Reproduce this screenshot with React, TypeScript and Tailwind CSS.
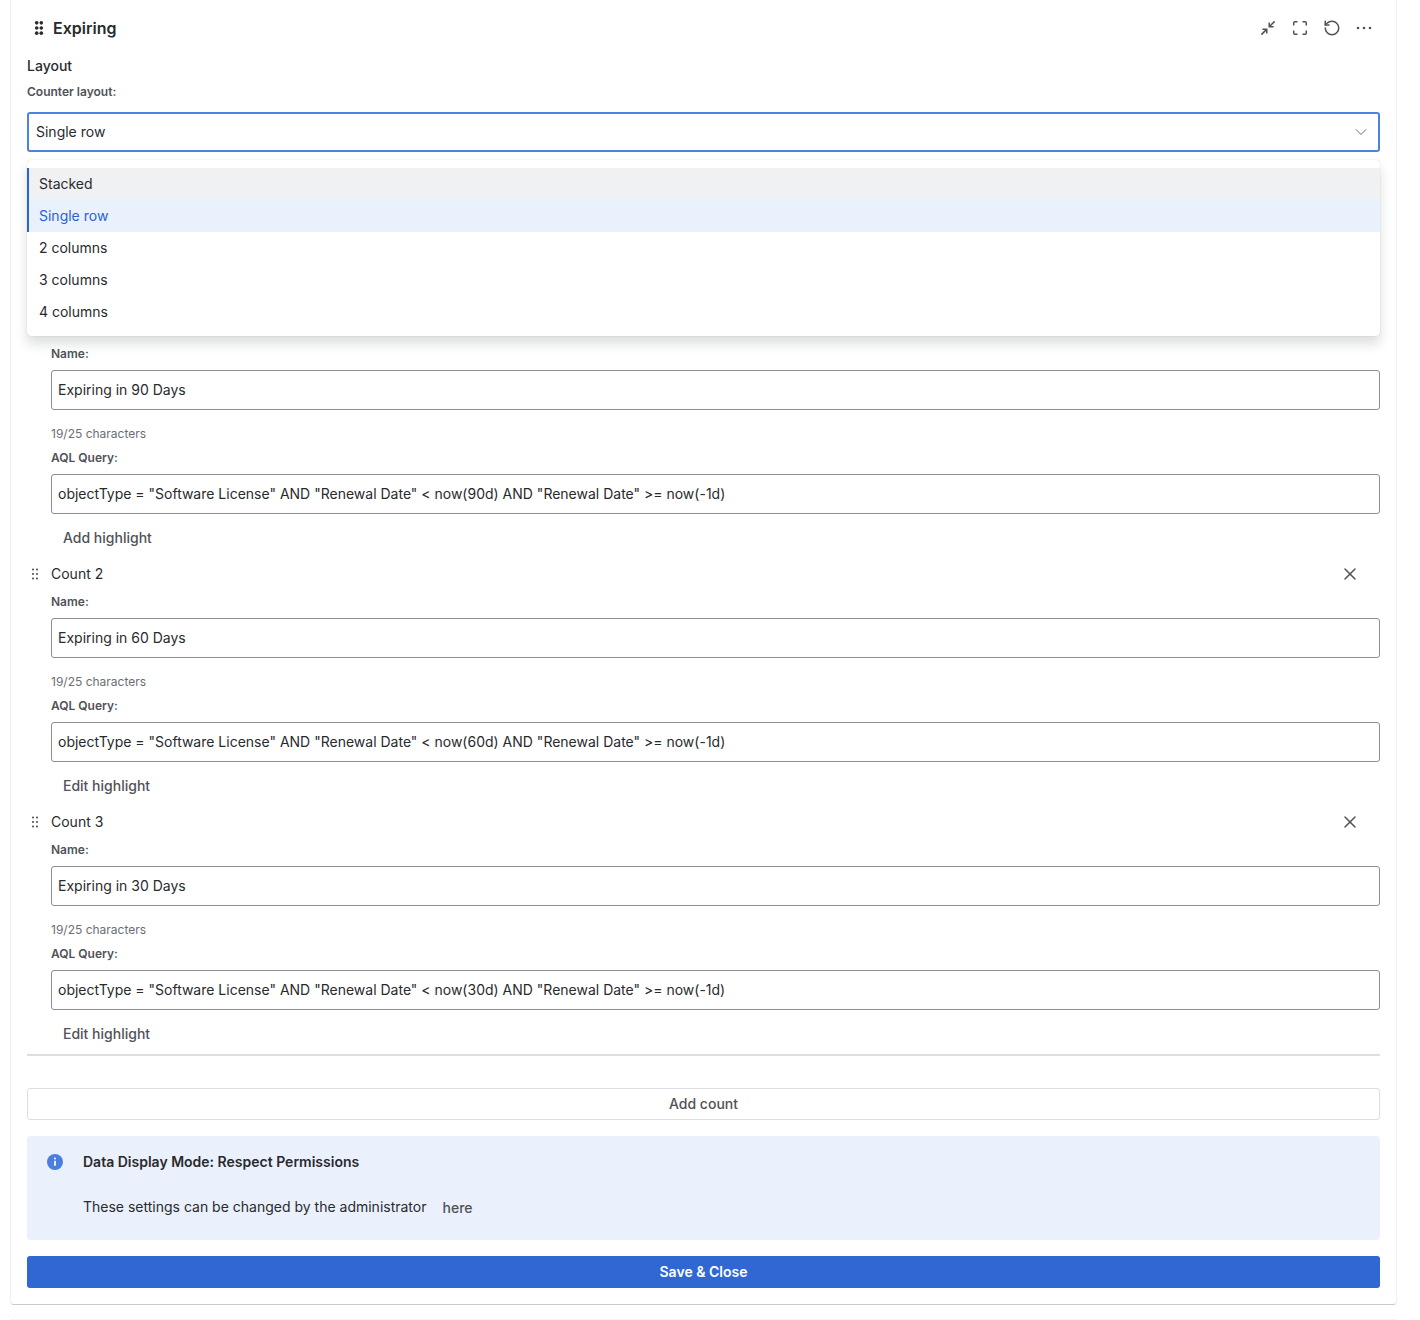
import React from "react";
import { ChevronDown, X, RotateCcw } from "lucide-react";

function Dots({ size = 14, r = 1.15, color = "#505258" }: { size?: number; r?: number; color?: string }) {
  const xs = [5, 9];
  const ys = [2.5, 7, 11.5];
  return (
    <svg width={size} height={size} viewBox="0 0 14 14" fill={color}>
      {xs.map((x) => ys.map((y) => <circle key={`${x}-${y}`} cx={x} cy={y} r={r} />))}
    </svg>
  );
}

function Collapse() {
  return (
    <svg width="16" height="16" viewBox="0 0 16 16" fill="none" stroke="#505258" strokeWidth="1.5">
      <path d="M14.6 1.4 9.4 6.6M9.2 2.4v4.4h4.4" />
      <path d="M1.4 14.6l5.2-5.2M2.4 9.2h4.4v4.4" />
    </svg>
  );
}

function Fullscreen() {
  return (
    <svg width="16" height="16" viewBox="0 0 16 16" fill="none" stroke="#505258" strokeWidth="1.5">
      <path d="M5.5 1.7H3a1.3 1.3 0 0 0-1.3 1.3v2.5M10.5 1.7H13A1.3 1.3 0 0 1 14.3 3v2.5M5.5 14.3H3A1.3 1.3 0 0 1 1.7 13v-2.5M10.5 14.3H13a1.3 1.3 0 0 0 1.3-1.3v-2.5" />
    </svg>
  );
}

function Input({ value }: { value: string }) {
  return (
    <div className="flex h-10 items-center rounded-[3px] border border-[#8c8f97] bg-white px-[6px] text-sm text-[#292a2e]">
      {value}
    </div>
  );
}

function Label({ children }: { children: React.ReactNode }) {
  return <div className="h-4 text-xs leading-4 font-semibold text-[#505258]">{children}</div>;
}

function Count({ title, name, days, action }: { title: string; name: string; days: string; action: string }) {
  return (
    <section>
      <div className="flex h-6 items-center">
        <div className="flex w-6 justify-start pl-[1px]">
          <Dots size={14} r={1.05} />
        </div>
        <div className="flex-1 text-sm text-[#292a2e]">{title}</div>
        <div className="mr-[22px] flex h-6 w-4 items-center justify-center">
          <X size={20} strokeWidth={1.8} color="#505258" className="shrink-0" />
        </div>
      </div>
      <div className="mt-2 pl-6">
        <Label>Name:</Label>
        <div className="mt-2">
          <Input value={name} />
        </div>
        <div className="mt-4 h-4 text-xs leading-4 text-[#6b6e76]">19/25 characters</div>
        <div className="mt-2">
          <Label>AQL Query:</Label>
        </div>
        <div className="mt-2">
          <Input value={`objectType = "Software License" AND "Renewal Date" < now(${days}) AND "Renewal Date" >= now(-1d)`} />
        </div>
        <div className="mt-2 flex h-8 items-center px-3 text-sm font-medium text-[#505258]">{action}</div>
      </div>
    </section>
  );
}

function Option({ label, state }: { label: string; state?: "hover" | "selected" }) {
  const cls =
    state === "hover"
      ? "bg-[#f0f1f2] text-[#292a2e] border-l-2 border-[#2a63d4] pl-[10px]"
      : state === "selected"
      ? "bg-[#e9f1fd] text-[#2a63d4] border-l-2 border-[#2a63d4] pl-[10px]"
      : "text-[#292a2e] pl-3";
  return <div className={`flex h-8 items-center text-sm ${cls}`}>{label}</div>;
}

export default function App() {
  return (
    <div className="h-[1320px] overflow-hidden bg-white font-['Inter',sans-serif]">
      <div className="ml-[10px] w-[1387px] rounded-b-[4px] border-x border-b border-x-[#f0f1f2] border-b-[#c9cace] bg-white px-4 pb-4">
        <header className="flex h-14 items-center">
          <div className="ml-1 flex flex-1 items-center gap-[6px]">
            <Dots size={16} r={1.6} color="#292a2e" />
            <h1 className="text-base font-semibold text-[#292a2e]">Expiring</h1>
          </div>
          <div className="mr-2 flex items-center gap-4">
            <Collapse />
            <Fullscreen />
            <div className="flex h-4 w-4 items-center justify-center">
              <RotateCcw size={18} strokeWidth={2} color="#505258" className="shrink-0" />
            </div>
            <svg width="16" height="16" viewBox="0 0 16 16" fill="#505258">
              <circle cx="2" cy="8" r="1.3" />
              <circle cx="8" cy="8" r="1.3" />
              <circle cx="14" cy="8" r="1.3" />
            </svg>
          </div>
        </header>
        <div className="h-5 text-sm leading-5 font-medium text-[#292a2e]">Layout</div>
        <div className="mt-2">
          <Label>Counter layout:</Label>
        </div>
        <div className="relative mt-3">
          <div className="flex h-10 items-center justify-between rounded-[3px] border-2 border-[#4c82e0] bg-white pr-[7px] pl-[7px] text-sm text-[#292a2e]">
            <span>Single row</span>
            <ChevronDown size={20} strokeWidth={1.2} color="#6b6e76" />
          </div>
          <div className="absolute top-12 right-0 left-0 z-10 rounded-[4px] bg-white py-2 shadow-[0_8px_12px_rgba(30,31,33,0.15),0_0_1px_rgba(30,31,33,0.31)]">
            <Option label="Stacked" state="hover" />
            <Option label="Single row" state="selected" />
            <Option label="2 columns" />
            <Option label="3 columns" />
            <Option label="4 columns" />
          </div>
        </div>
        <div className="mt-[162px] flex flex-col gap-2">
          <Count title="" name="Expiring in 90 Days" days="90d" action="Add highlight" />
          <Count title="Count 2" name="Expiring in 60 Days" days="60d" action="Edit highlight" />
          <Count title="Count 3" name="Expiring in 30 Days" days="30d" action="Edit highlight" />
        </div>
        <div className="mt-1 h-[2px] bg-[#dddee1]"></div>
        <div className="mt-8 flex h-8 items-center justify-center rounded-[3px] border border-[#dddee1] bg-white text-sm font-medium text-[#505258]">
          Add count
        </div>
        <div className="mt-4 h-[104px] rounded-[4px] bg-[#ebf1fc] pt-4 pl-5">
          <div className="flex items-center">
            <svg width="16" height="16" viewBox="0 0 16 16">
              <circle cx="8" cy="8" r="8" fill="#4a7fe0" />
              <circle cx="8" cy="4.6" r="1" fill="#fff" />
              <rect x="7.1" y="6.8" width="1.8" height="5" rx="0.5" fill="#fff" />
            </svg>
            <div className="ml-5 text-sm leading-5 font-semibold text-[#292a2e]">Data Display Mode: Respect Permissions</div>
          </div>
          <div className="mt-[25px] ml-9 flex items-start text-sm leading-5 text-[#292a2e]">
            <span>These settings can be changed by the administrator</span>
            <span className="mt-px ml-4 font-medium text-[#505258]">here</span>
          </div>
        </div>
        <div className="mt-4 flex h-8 items-center justify-center rounded-[3px] bg-[#3067d3] text-sm font-semibold text-white">
          Save &amp; Close
        </div>
      </div>
      <div className="mt-[14px] ml-[10px] h-px w-[1387px] bg-[#f4f4f5]"></div>
    </div>
  );
}
